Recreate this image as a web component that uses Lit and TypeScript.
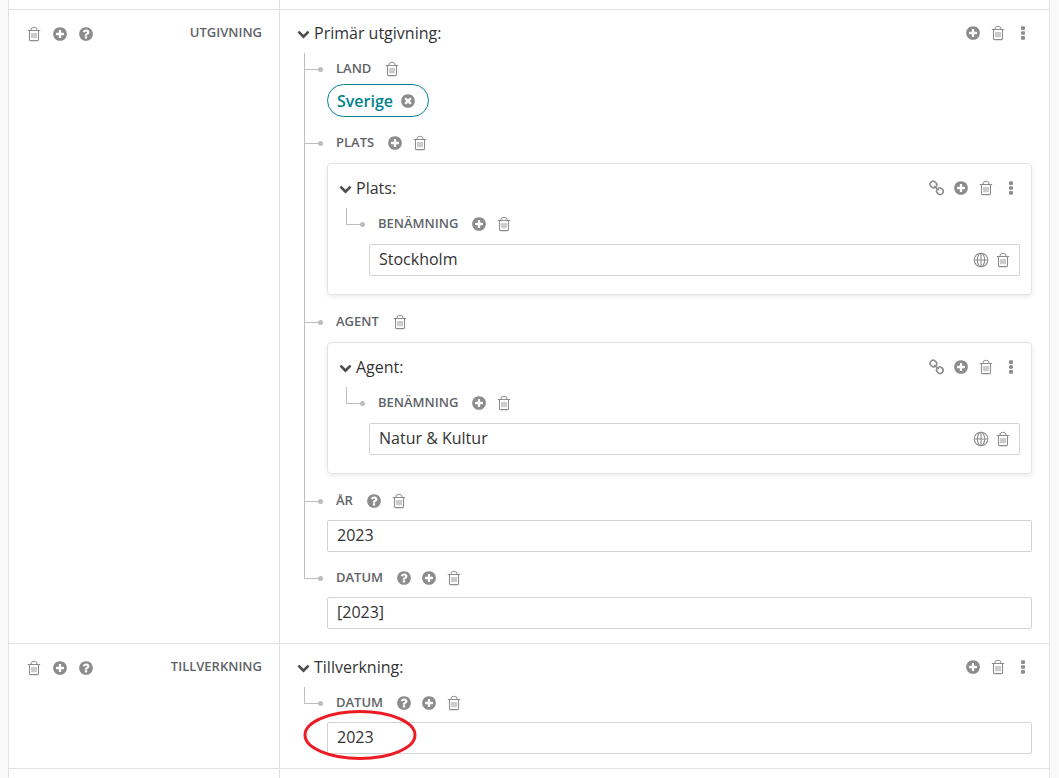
import { LitElement, html, svg, css, nothing, TemplateResult } from "lit";
import { customElement, property } from "lit/decorators.js";
import { classMap } from "lit/directives/class-map.js";

type IconName = "trash" | "plus" | "help" | "close" | "more" | "link" | "globe" | "chevron";

const DISC =
  "q0 209-103 385.5t-279.5 279.5-385.5 103-385.5-103-279.5-279.5-103-385.5 103-385.5 279.5-279.5 385.5-103 385.5 103 279.5 279.5 103 385.5z";

const FA = "0 0 1792 1792";

const ICONS: Record<IconName, { box: string; size: number; label: string; art: TemplateResult }> = {
  plus: {
    box: FA,
    size: 16,
    label: "Lägg till",
    art: svg`<path d=${"M1344 960v-128q0-26-19-45t-45-19h-256v-256q0-26-19-45t-45-19h-128q-26 0-45 19t-19 45v256h-256q-26 0-45 19t-19 45v128q0 26 19 45t45 19h256v256q0 26 19 45t45 19h128q26 0 45-19t19-45v-256h256q26 0 45-19t19-45zm320-64" + DISC} />`,
  },
  help: {
    box: FA,
    size: 16,
    label: "Hjälp",
    art: svg`<path d=${"M1024 1376v-192q0-14-9-23t-23-9h-192q-14 0-23 9t-9 23v192q0 14 9 23t23 9h192q14 0 23-9t9-23zm256-672q0-88-55.5-163t-138.5-116-170-41q-243 0-371 213-15 24 8 42l132 100q7 6 19 6 16 0 25-12 53-68 86-92 34-24 86-24 48 0 85.5 26t37.5 59q0 38-20 61t-68 45q-63 28-115.5 86.5t-52.5 125.5v36q0 14 9 23t23 9h192q14 0 23-9t9-23q0-19 21.5-49.5t54.5-49.5q32-18 49-28.5t46-35 44.5-48 28-60.5 12.5-81zm384 192" + DISC} />`,
  },
  close: {
    box: FA,
    size: 16,
    label: "Ta bort",
    art: svg`<path d=${"M1277 1122q0-26-19-45l-181-181 181-181q19-19 19-45 0-27-19-46l-90-90q-19-19-46-19-26 0-45 19l-181 181-181-181q-19-19-45-19-27 0-46 19l-90 90q-19 19-19 46 0 26 19 45l181 181-181 181q-19 19-19 45 0 27 19 46l90 90q19 19 46 19 26 0 45-19l181-181 181 181q19 19 45 19 27 0 46-19l90-90q19-19 19-46zm387-226" + DISC} />`,
  },
  chevron: {
    box: FA,
    size: 13,
    label: "",
    art: svg`<path d="M1683 808l-742 741q-19 19-45 19t-45-19l-742-741q-19-19-19-45.5t19-45.5l166-165q19-19 45-19t45 19l531 531 531-531q19-19 45-19t45 19l166 165q19 19 19 45.5t-19 45.5z" />`,
  },
  trash: {
    box: "0 0 16 16",
    size: 16,
    label: "Radera",
    art: svg`<g fill="none" stroke="currentColor">
      <path d="M1.8 4.5h12.4" />
      <path d="M4.9 4.3q0-2.9 2.2-2.9h1.8q2.2 0 2.2 2.9" />
      <path d="M3.5 4.8v8.7q0 1.1 1.1 1.1h6.8q1.1 0 1.1-1.1v-8.7" stroke-width="1.1" />
      <path d="M6 7v5.2M8 7v5.2M10 7v5.2" stroke-width="0.9" />
    </g>`,
  },
  more: {
    box: "0 0 16 16",
    size: 16,
    label: "Fler val",
    art: svg`<rect x="6" y="1.3" width="4" height="3.6" rx="1" /><rect x="6" y="6.2" width="4" height="3.6" rx="1" /><rect x="6" y="11.1" width="4" height="3.6" rx="1" />`,
  },
  link: {
    box: "0 0 16 16",
    size: 16,
    label: "Länka",
    art: svg`<g fill="none" stroke="currentColor" stroke-width="1.6">
      <rect x="2.1" y="1.5" width="6.6" height="6" rx="2.8" transform="rotate(40 5.4 4.5)" />
      <rect x="8.6" y="8.2" width="6.6" height="6" rx="2.8" transform="rotate(40 11.9 11.2)" />
      <path d="M6.3 6.1l4.6 3.9" />
    </g>`,
  },
  globe: {
    box: "0 0 16 16",
    size: 16,
    label: "Språk",
    art: svg`<g fill="none" stroke="currentColor" stroke-width="1.1">
      <circle cx="8" cy="8" r="6.8" /><ellipse cx="8" cy="8" rx="3.6" ry="6.8" />
      <path d="M8 1v14M1 8h14" />
    </g>`,
  },
};

const drawIcon = (name: IconName) => {
  const i = ICONS[name];
  return html`<svg class="icon" viewBox=${i.box} width=${i.size} height=${i.size} fill="currentColor" aria-hidden="true">${i.art}</svg>`;
};

const actions = (names: IconName[]) =>
  names.map(
    (n) => html`<button class="action" type="button" aria-label=${ICONS[n].label}>${drawIcon(n)}</button>`
  );

interface Field {
  id: string;
  label: string;
  icons: IconName[];
  value?: string;
  inner?: IconName[];
  chip?: string;
  entity?: Entity;
  circled?: boolean;
}

interface Entity {
  title: string;
  icons: IconName[];
  fields: Field[];
}

interface Section {
  label: string;
  entity: Entity;
}

const SECTIONS: Section[] = [
  {
    label: "UTGIVNING",
    entity: {
      title: "Primär utgivning:",
      icons: ["plus", "trash", "more"],
      fields: [
        { id: "land", label: "LAND", icons: ["trash"], chip: "Sverige" },
        {
          id: "plats",
          label: "PLATS",
          icons: ["plus", "trash"],
          entity: {
            title: "Plats:",
            icons: ["link", "plus", "trash", "more"],
            fields: [
              { id: "plats-namn", label: "BENÄMNING", icons: ["plus", "trash"], value: "Stockholm", inner: ["globe", "trash"] },
            ],
          },
        },
        {
          id: "agent",
          label: "AGENT",
          icons: ["trash"],
          entity: {
            title: "Agent:",
            icons: ["link", "plus", "trash", "more"],
            fields: [
              { id: "agent-namn", label: "BENÄMNING", icons: ["plus", "trash"], value: "Natur & Kultur", inner: ["globe", "trash"] },
            ],
          },
        },
        { id: "ar", label: "ÅR", icons: ["help", "trash"], value: "2023" },
        { id: "datum", label: "DATUM", icons: ["help", "plus", "trash"], value: "[2023]" },
      ],
    },
  },
  {
    label: "TILLVERKNING",
    entity: {
      title: "Tillverkning:",
      icons: ["plus", "trash", "more"],
      fields: [
        { id: "tillv-datum", label: "DATUM", icons: ["help", "plus", "trash"], value: "2023", circled: true },
      ],
    },
  },
];

@customElement("app-root")
export class AppRoot extends LitElement {
  @property({ attribute: false }) sections: Section[] = SECTIONS;

  static styles = css`
    :host {
      display: block;
      min-height: 100vh;
      overflow: hidden;
      background: #f9f9f9;
      color: #333;
      font: 16px/24px "Open Sans", "Noto Sans", sans-serif;
    }
    * {
      box-sizing: border-box;
    }
    button {
      padding: 0;
      border: 0;
      background: none;
      color: inherit;
      font: inherit;
      cursor: pointer;
    }
    .panel {
      margin: 0 9px 0 8px;
      border: solid #e3e3e3;
      border-width: 0 1px;
      background: #fff;
    }
    .section {
      display: grid;
      grid-template-columns: 271px minmax(0, 1fr);
      border-top: 1px solid #e3e3e3;
    }
    .section.stub {
      border-top: 0;
    }
    .section.stub .side,
    .section.stub .main {
      height: 9px;
      padding: 0;
    }
    .side {
      display: flex;
      align-items: flex-start;
      justify-content: space-between;
      padding: 12px 17px 0 17px;
      border-right: 1px solid #e0e0e0;
    }
    .side-actions {
      display: flex;
      gap: 10px;
      height: 24px;
      align-items: center;
    }
    .main {
      padding: 0 17px 14px 17px;
    }
    .label {
      padding-bottom: 2px;
      color: #5f6368;
      font-size: 13px;
      font-weight: 600;
      line-height: 20px;
    }
    .icon {
      display: block;
    }
    .action {
      display: block;
      flex: none;
      width: 16px;
      height: 16px;
      color: #8c8c8c;
    }
    .entity-head {
      display: flex;
      align-items: center;
      justify-content: space-between;
      height: 43px;
      padding: 3px 1px 0 0;
    }
    .toggle {
      display: flex;
      align-items: center;
      gap: 4px;
    }
    .toggle .icon {
      color: #4d4d4d;
    }
    .entity-actions {
      display: flex;
      gap: 9px;
    }
    .tree {
      margin: 0;
      padding: 0 0 0 7px;
      list-style: none;
    }
    .node {
      --lead: 14px;
      display: grid;
      grid-template-columns: 23px minmax(0, 1fr);
    }
    .node:first-child {
      --lead: 4px;
    }
    .rail {
      display: flex;
      flex-direction: column;
    }
    .arm {
      position: relative;
      width: 16px;
      height: calc(var(--lead) + 13px);
      border: solid #bdbdbd;
      border-width: 0 0 1px 1px;
    }
    .arm::after {
      content: "";
      position: absolute;
      right: -3px;
      bottom: -3px;
      width: 5px;
      height: 5px;
      border-radius: 50%;
      background: #bdbdbd;
    }
    .stem {
      flex: 1;
      border-left: 1px solid #bdbdbd;
    }
    .node:last-child > .rail > .stem {
      border-left: 0;
    }
    .body {
      padding-top: var(--lead);
    }
    .node-head {
      display: flex;
      align-items: center;
      gap: 9px;
      height: 24px;
      padding-left: 9px;
    }
    .node-head .label {
      margin-right: 4px;
    }
    .chip {
      display: inline-flex;
      align-items: center;
      gap: 7px;
      height: 33px;
      margin-top: 3px;
      padding: 0 12px 0 9px;
      border: 1px solid #00838f;
      border-radius: 17px;
      color: #00838f;
      font-weight: 600;
      vertical-align: top;
    }
    .card {
      margin: 8px 0 1px;
      padding: 1px 11px 18px;
      border: 1px solid #e3e3e3;
      border-radius: 4px;
      box-shadow: 0 2px 5px rgba(0, 0, 0, 0.08);
    }
    .field {
      position: relative;
      display: flex;
      align-items: center;
      height: 32px;
      margin-top: 7px;
      padding-right: 8px;
      gap: 6px;
      border: 1px solid #d3d3d3;
      border-radius: 2px;
      background: #fff;
    }
    .card .field {
      margin-top: 8px;
    }
    .input {
      flex: 1;
      min-width: 0;
      height: 30px;
      padding: 0 0 2px 9px;
      border: 0;
      outline: 0;
      background: none;
      color: #333;
      font: inherit;
    }
    .marker {
      position: absolute;
      left: -25px;
      top: -14px;
      pointer-events: none;
    }
  `;

  private renderField(f: Field): TemplateResult {
    return html`
      <li class="node">
        <div class="rail"><div class="arm"></div><div class="stem"></div></div>
        <div class="body">
          <div class="node-head">
            ${f.value !== undefined
              ? html`<label class="label" for=${f.id}>${f.label}</label>`
              : html`<span class="label">${f.label}</span>`}
            ${actions(f.icons)}
          </div>
          ${f.chip ? html`<div class="chip"><span>${f.chip}</span>${actions(["close"])}</div>` : nothing}
          ${f.entity ? html`<div class="card">${this.renderEntity(f.entity)}</div>` : nothing}
          ${f.value !== undefined
            ? html`<div class="field">
                <input class="input" id=${f.id} type="text" .value=${f.value} />
                ${actions(f.inner ?? [])}
                ${f.circled
                  ? html`<svg class="marker" width="114" height="52" viewBox="0 0 114 52" aria-hidden="true">
                      <ellipse cx="57" cy="26" rx="55" ry="23.5" fill="none" stroke="#ed1c24" stroke-width="3" />
                    </svg>`
                  : nothing}
              </div>`
            : nothing}
        </div>
      </li>
    `;
  }

  private renderEntity(e: Entity): TemplateResult {
    return html`
      <div class="entity-head">
        <button class="toggle" type="button" aria-expanded="true">${drawIcon("chevron")}<span>${e.title}</span></button>
        <div class="entity-actions">${actions(e.icons)}</div>
      </div>
      <ul class="tree">
        ${e.fields.map((f) => this.renderField(f))}
      </ul>
    `;
  }

  private renderStub(first: boolean) {
    return html`<div class=${classMap({ section: true, stub: first })}>
      <div class="side"></div>
      <div class="main"></div>
    </div>`;
  }

  render() {
    return html`
      <main class="panel">
        ${this.renderStub(true)}
        ${this.sections.map(
          (s) => html`<section class="section">
            <div class="side">
              <div class="side-actions">${actions(["trash", "plus", "help"])}</div>
              <span class="label">${s.label}</span>
            </div>
            <div class="main">${this.renderEntity(s.entity)}</div>
          </section>`
        )}
        ${this.renderStub(false)}
      </main>
    `;
  }
}
